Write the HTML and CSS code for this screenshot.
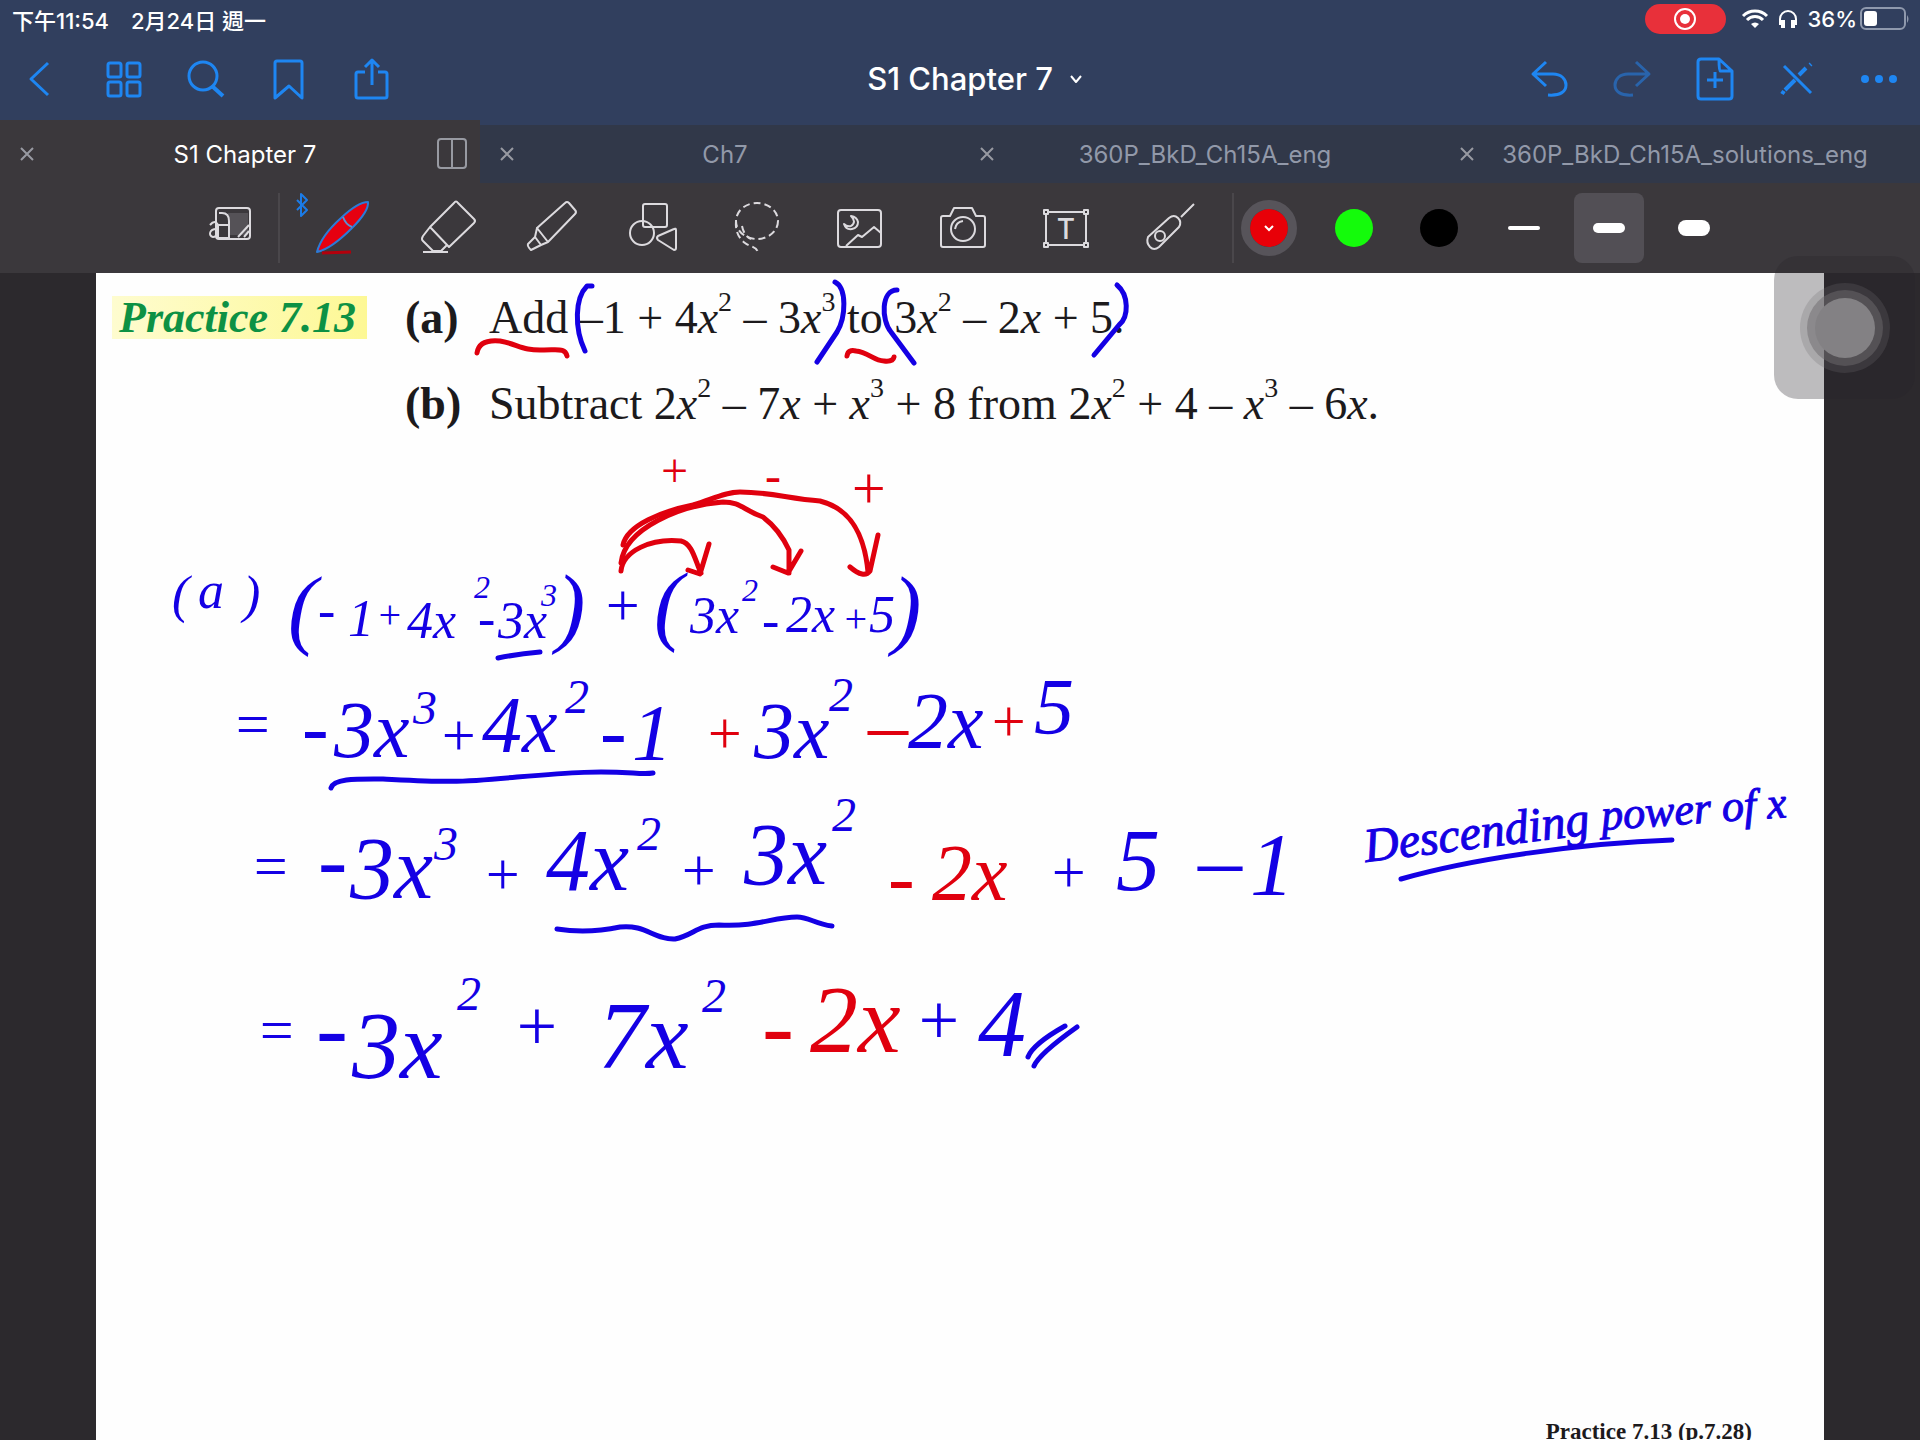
FILE: index.html
```html
<!DOCTYPE html>
<html lang="zh-Hant">
<head>
  <meta charset="UTF-8">
  <meta name="viewport" content="width=device-width, initial-scale=1.0">
  <title>S1 Chapter 7</title>
  <link rel="stylesheet" href="styles.css">
</head>
<body>
<header class="top">
  <div class="status">
    <span>下午11:54</span>
    <span class="date">2月24日 週一</span>
    <div class="status-right">
      <span class="record">
        <svg width="24" height="24" viewBox="0 0 24 24"><circle cx="12" cy="12" r="10" fill="none" stroke="#fff" stroke-width="2"/><circle cx="12" cy="12" r="5" fill="#fff"/></svg>
      </span>
      <svg class="wifi" width="26" height="20" viewBox="0 0 26 20" fill="none" stroke="#fff" stroke-width="3"><path d="M1 7a17 17 0 0 1 24 0M5 11a11 11 0 0 1 16 0"/><path d="M13 19l-4-4a6 6 0 0 1 8 0z" fill="#fff" stroke="none"/></svg>
      <svg class="phones" width="20" height="20" viewBox="0 0 20 20" fill="none" stroke="#fff" stroke-width="2"><path d="M2 16V10a8 8 0 0 1 16 0v6"/><path d="M5 11v8M15 11v8" stroke-width="4"/></svg>
      <span>36%</span>
      <svg class="battery" width="50" height="24" viewBox="0 0 50 24"><rect x="1" y="1" width="44" height="21" rx="5" fill="none" stroke="#8f99ad" stroke-width="2"/><rect x="4" y="4" width="13" height="15" rx="3" fill="#fff"/><path d="M47 8q3 4 0 8z" fill="#8f99ad"/></svg>
    </div>
  </div>

  <nav class="nav">
    <button aria-label="Back"><svg viewBox="0 0 44 44"><path d="M29 6 12 22l17 16"/></svg></button>
    <button aria-label="Thumbnails"><svg viewBox="0 0 44 44"><rect x="7" y="6" width="13" height="14" rx="2"/><rect x="26" y="6" width="13" height="14" rx="2"/><rect x="7" y="25" width="13" height="14" rx="2"/><rect x="26" y="25" width="13" height="14" rx="2"/></svg></button>
    <button aria-label="Search"><svg viewBox="0 0 44 44"><circle cx="20" cy="19" r="14"/><path d="m29 29 11 10" stroke-width="4"/></svg></button>
    <button aria-label="Bookmark"><svg viewBox="0 0 44 44"><path d="M10 41V6q0-2 2-2h23q2 0 2 2v35L24 29z"/></svg></button>
    <button aria-label="Share"><svg viewBox="0 0 44 44"><path d="M18 15h-7q-2 0-2 2v22q0 2 2 2h27q2 0 2-2V17q0-2-2-2h-7M25 28V3m-7 7 7-7 7 7"/></svg></button>
    <button class="doc-title">S1 Chapter 7 <svg class="caret" viewBox="0 0 14 14"><path d="m2 4 5 6 5-6"/></svg></button>
    <button aria-label="Undo"><svg viewBox="0 0 44 44"><path d="M17 5 4 17l13 12M5 17h19c8 0 13 5 13 11s-5 11-18 10"/></svg></button>
    <button aria-label="Redo" class="off"><svg viewBox="0 0 44 44"><path d="m25 5 13 12-13 12M37 17H17C9 17 4 22 4 28s5 11 18 10"/></svg></button>
    <button aria-label="Add page"><svg viewBox="0 0 44 44"><path d="M26 2H8Q5 2 5 5v34q0 3 3 3h28q3 0 3-3V14zq0 12 1 12h12M22 15v16M14 23h16"/></svg></button>
    <button aria-label="Read only"><svg viewBox="0 0 44 44"><path d="m9 9 27 27"/><path d="m10 33 10-10m4-5 7-7M35 8l1-1M7 37l2-3" stroke-width="4"/></svg></button>
    <button aria-label="More"><svg viewBox="0 0 44 44" class="dots"><circle cx="8" cy="22" r="4"/><circle cx="22" cy="22" r="4"/><circle cx="36" cy="22" r="4"/></svg></button>
  </nav>

  <div class="tabs">
    <div class="tab active">
      <button class="close" aria-label="Close tab"><svg viewBox="0 0 14 14"><path d="m1 1 12 12M13 1 1 13"/></svg></button>
      <a href="#">S1 Chapter 7</a>
      <button class="split" aria-label="Split view"><svg viewBox="0 0 32 32"><rect x="2" y="1" width="28" height="29" rx="3"/><path d="M16 1v29"/></svg></button>
    </div>
    <div class="tab">
      <button class="close" aria-label="Close tab"><svg viewBox="0 0 14 14"><path d="m1 1 12 12M13 1 1 13"/></svg></button>
      <a href="#">Ch7</a>
    </div>
    <div class="tab">
      <button class="close" aria-label="Close tab"><svg viewBox="0 0 14 14"><path d="m1 1 12 12M13 1 1 13"/></svg></button>
      <a href="#">360P_BkD_Ch15A_eng</a>
    </div>
    <div class="tab">
      <button class="close" aria-label="Close tab"><svg viewBox="0 0 14 14"><path d="m1 1 12 12M13 1 1 13"/></svg></button>
      <a href="#">360P_BkD_Ch15A_solutions_eng</a>
    </div>
  </div>
</header>

<div class="toolbar">
  <button class="zoom-tool" aria-label="Zoom window"><svg viewBox="0 0 60 60"><path d="M29 15h20v22H29z" fill="#555257" stroke="none"/><rect x="17" y="10" width="34" height="31" rx="3"/><path d="M20 15h3q7 0 7 8v17H19M19 27h11M39 39l11-12M45 39l5-6M11 27q5-6 8 0v13M19 31c-9-1-10 7-5 8q3 0 5-4"/></svg></button>
  <button class="pen-tool" aria-label="Pen"><svg viewBox="0 0 60 60"><path d="M-18 2-8 12l-6 6V-4l6 6-10 10" stroke="#1b7ce8"/><path d="M2 54Q6 38 26 20 43 4 53 4q1 9-16 26Q16 51 2 54z" fill="#e60010" stroke="#2b7bd8"/><path d="M28 19q3 8 9 10" stroke="#5b8fd0"/><path d="M7 55l29-1" stroke="#b3000c" stroke-width="3"/></svg></button>
  <button aria-label="Eraser"><svg viewBox="0 0 60 60"><path d="M36 5q2-3 4 0l16 16q2 2 0 4L31 49 12 29zM12 29l-7 9q-2 3 0 5l10 10h8l6-6M5 54h25"/></svg></button>
  <button aria-label="Highlighter"><svg viewBox="0 0 60 60"><path d="M16 30 44 5q2-2 4 0l6 7q2 2 0 4L27 44zM16 30l-2 9 6 8 7-3M14 39l-7 7q-1 2 3 6l10-5"/></svg></button>
  <button aria-label="Shapes"><svg viewBox="0 0 60 60"><rect x="19" y="6" width="24" height="23" rx="2"/><circle cx="18" cy="35" r="12"/><path d="M34 38q-2 2 0 4l16 10q2 0 2-2V32q0-2-2-1z"/></svg></button>
  <button aria-label="Lasso"><svg viewBox="0 0 60 60" stroke-dasharray="7 4"><ellipse cx="30" cy="23" rx="21" ry="18"/><path d="M9 23c-1 12 4 18 9 22s12 3 13 10M15 28q2 10 9 13"/></svg></button>
  <button aria-label="Image"><svg viewBox="0 0 60 60"><rect x="8" y="12" width="43" height="37" rx="3"/><path d="M21 18q6 6 0 10-4 1-7-2 2 6 8 5 6-1 6-7-1-5-7-6zM16 48l12-11 4 2 12-10 7 6"/></svg></button>
  <button aria-label="Camera"><svg viewBox="0 0 60 60"><path d="M10 18h7l4-8h18l4 8h7q2 0 2 2v27q0 2-2 2H10q-2 0-2-2V20q0-2 2-2z"/><circle cx="30" cy="31" r="12"/><path d="M22 31q1-7 8-8"/></svg></button>
  <button aria-label="Text"><svg viewBox="0 0 60 60"><path d="M13 14h34M13 47h34M10 17v27M50 17v27"/><path d="M8 12h4v4H8zM48 12h4v4h-4zM8 45h4v4H8zM48 45h4v4h-4z"/><text class="tee" x="30" y="41">T</text></svg></button>
  <button aria-label="Laser pointer"><svg viewBox="0 0 60 60"><path d="M9 39 30 20q5-4 9 0t1 9L20 49q-5 4-9 0t-2-10zM42 19 55 6"/><circle cx="21" cy="38" r="5"/></svg></button>
  <div class="inks">
    <button class="ink red" aria-label="Red"><svg class="caret" viewBox="0 0 14 14"><path d="m3 5 4 4 4-4"/></svg></button>
    <button class="ink green" aria-label="Green"></button>
    <button class="ink black" aria-label="Black"></button>
    <button class="stroke thin" aria-label="Thin"></button>
    <button class="stroke medium" aria-label="Medium"></button>
    <button class="stroke thick" aria-label="Thick"></button>
  </div>
</div>

<main class="canvas">
  <article class="sheet">
    <section class="exercise">
      <h1>Practice 7.13</h1>
      <ol>
        <li><b>(a)</b><p>Add –1 + 4<i>x</i><sup>2</sup> – 3<i>x</i><sup>3</sup> to 3<i>x</i><sup>2</sup> – 2<i>x</i> + 5.</p></li>
        <li><b>(b)</b><p>Subtract 2<i>x</i><sup>2</sup> – 7<i>x</i> + <i>x</i><sup>3</sup> + 8 from 2<i>x</i><sup>2</sup> + 4 – <i>x</i><sup>3</sup> – 6<i>x</i>.</p></li>
      </ol>
    </section>
    <footer>Practice 7.13 (p.7.28)</footer>

    <!-- ink layer: free-hand notes over the page -->
    <svg class="notes" width="1728" height="1167" viewBox="96 273 1728 1167">
      <g class="pen-red">
        <path d="M477 353q2-14 23-12c18 3 22 10 44 9 15 0 21-2 23 6"/>
        <path d="M847 356q1-7 9-5c12 1 18 10 28 10q9 1 10-4"/>
        <path d="M621 571c2-20 30-33 60-30 12 3 14 20 20 32M688 570l12 4 9-30"/>
        <path d="M621 563c4-35 60-58 102-61 18 0 20 8 40 15 12 9 20 20 26 33v23M773 567l15 6 13-22"/>
        <path d="M623 545c4-20 40-34 70-40 20-6 32-13 47-13 30 0 50 7 80 9 28 7 44 29 48 71M850 567q14 12 20 4l8-36"/>
      </g>
      <g class="pen-blue">
        <path d="M592 286h-5c-12 12-13 42-2 65"/>
        <path d="M835 282c12 6 11 35 2 50l-20 30"/>
        <path d="M897 290c-16 0-16 30-6 42l23 31"/>
        <path d="M1117 285c12 10 12 32 2 40l-25 30"/>
        <path d="M498 658q20-4 42-6"/>
        <path d="M331 788c3-10 27-9 52-9 60 3 70 4 134-2 60-5 80-6 116-4q14 1 20 0"/>
        <path d="M557 929c25 4 44 2 63-2 25-3 35 13 55 12 19-4 22-14 44-14 40 2 53-8 78-8 12 0 18 7 35 9"/>
        <path d="M1401 879c70-20 180-36 271-39"/>
        <path d="M1065 1026q-32 18-37 31M1077 1027q-38 27-43 39"/>
      </g>

      <text class="hand s48 t-red"><tspan x="658" y="487">+</tspan><tspan x="765" y="492">-</tspan></text>
      <text class="hand s60 t-red"><tspan x="848" y="508">+</tspan></text>

      <text class="hand s52"><tspan x="172" y="612">(</tspan><tspan x="198" y="608">a</tspan><tspan x="243" y="612">)</tspan><tspan x="318" y="628">-</tspan><tspan x="348" y="636">1</tspan><tspan x="407" y="638">4x</tspan><tspan x="478" y="636">-</tspan><tspan x="498" y="638">3x</tspan><tspan x="690" y="633">3x</tspan><tspan x="762" y="638">-</tspan><tspan x="786" y="632">2x</tspan><tspan x="869" y="632">5</tspan></text>
      <text class="hand s88"><tspan x="288" y="638">(</tspan><tspan x="556" y="636">)</tspan><tspan x="654" y="634">(</tspan><tspan x="892" y="638">)</tspan></text>
      <text class="hand s40"><tspan x="376" y="628">+</tspan><tspan x="842" y="632">+</tspan></text>
      <text class="hand s60"><tspan x="602" y="625">+</tspan></text>
      <text class="hand s32"><tspan x="474" y="598">2</tspan><tspan x="541" y="606">3</tspan><tspan x="742" y="601">2</tspan></text>

      <text class="hand s80"><tspan x="302" y="754">-</tspan><tspan x="334" y="757">3x</tspan><tspan x="482" y="752">4x</tspan><tspan x="600" y="758">-</tspan><tspan x="632" y="760">1</tspan><tspan x="754" y="758">3x</tspan><tspan x="908" y="748">2x</tspan><tspan x="1034" y="734">5</tspan></text>
      <text class="hand s60"><tspan x="232" y="744">=</tspan><tspan x="438" y="755">+</tspan></text>
      <text class="hand s48"><tspan x="413" y="724">3</tspan><tspan x="565" y="713">2</tspan><tspan x="829" y="711">2</tspan></text>
      <text class="hand s60 t-red"><tspan x="704" y="753">+</tspan><tspan x="988" y="741">+</tspan></text>
      <text class="hand s80 t-red"><tspan x="868" y="752">–</tspan></text>

      <text class="hand s88"><tspan x="318" y="890">-</tspan><tspan x="350" y="898">3x</tspan><tspan x="546" y="890">4x</tspan><tspan x="744" y="884">3x</tspan><tspan x="1116" y="890">5</tspan><tspan x="1198" y="890">–</tspan><tspan x="1250" y="894">1</tspan></text>
      <text class="hand s60"><tspan x="250" y="886">=</tspan><tspan x="482" y="894">+</tspan><tspan x="678" y="890">+</tspan><tspan x="1048" y="892">+</tspan></text>
      <text class="hand s48"><tspan x="434" y="860">3</tspan><tspan x="637" y="850">2</tspan><tspan x="832" y="831">2</tspan></text>
      <text class="hand s80 t-red"><tspan x="888" y="904">-</tspan><tspan x="932" y="900">2x</tspan></text>

      <text class="hand s96"><tspan x="316" y="1060">-</tspan><tspan x="352" y="1078">3x</tspan><tspan x="598" y="1068">7x</tspan><tspan x="978" y="1056">4</tspan></text>
      <text class="hand s60"><tspan x="256" y="1050">=</tspan></text>
      <text class="hand s72"><tspan x="512" y="1050">+</tspan><tspan x="914" y="1044">+</tspan></text>
      <text class="hand s48"><tspan x="457" y="1010">2</tspan><tspan x="702" y="1012">2</tspan></text>
      <text class="hand s96 t-red"><tspan x="762" y="1058">-</tspan><tspan x="810" y="1052">2x</tspan></text>

      <text class="hand note s48" transform="rotate(-7 1366 862)" x="1366" y="862">Descending</text>
      <text class="hand note s44" transform="rotate(-4 1602 830)" x="1602" y="830">power of x</text>
    </svg>
  </article>
  <button class="assist" aria-label="AssistiveTouch"><span></span></button>
</main>
</body>
</html>
```
FILE: styles.css
```css
* {
  box-sizing: border-box;
}
body {
  margin: 0;
  height: 100vh;
  display: flex;
  flex-direction: column;
  overflow: hidden;
  background: #2c292d;
  color: #fff;
  font-family: Inter, "Noto Sans CJK TC", sans-serif;
}
button {
  display: flex;
  align-items: center;
  justify-content: center;
  padding: 0;
  border: none;
  background: none;
  color: inherit;
  font: inherit;
  cursor: pointer;
}
a {
  color: inherit;
  text-decoration: none;
}
svg {
  overflow: visible;
}
.top {
  background: #313f5e;
}

/* status bar */
.status {
  display: flex;
  align-items: center;
  height: 37px;
  padding: 0 10px 0 12px;
  font-size: 22px;
  font-weight: 500;
}
.date {
  margin-left: 22px;
}
.status-right {
  display: flex;
  align-items: center;
  margin-left: auto;
}
.record {
  display: flex;
  align-items: center;
  justify-content: center;
  width: 81px;
  height: 30px;
  margin-right: 16px;
  border-radius: 15px;
  background: #e8303a;
}
.wifi,
.phones {
  margin-right: 10px;
}
.battery {
  margin-left: 3px;
}

/* navigation bar */
.nav {
  display: flex;
  height: 83px;
}
.nav button {
  width: 82px;
}
.nav svg {
  width: 44px;
  height: 44px;
  fill: none;
  stroke: #1e86f2;
  stroke-width: 3;
  stroke-linejoin: round;
}
.nav .off svg {
  stroke: #2964ac;
}
.nav .dots {
  fill: #1e86f2;
  stroke: none;
}
.nav .doc-title {
  flex: 1;
  gap: 16px;
  padding-left: 30px;
  font-size: 31px;
  font-weight: 500;
}
.nav .caret,
.ink .caret {
  width: 14px;
  height: 14px;
  fill: none;
  stroke: #fff;
  stroke-width: 2;
}

/* tabs */
.tabs {
  display: flex;
  height: 63px;
}
.tab {
  flex: 1;
  display: grid;
  grid-template-columns: 54px 1fr 44px;
  align-items: center;
  border-top: 5px solid #313f5e;
  background: #313849;
  color: #9299a9;
  font-size: 24px;
  text-align: center;
  white-space: nowrap;
}
.tab.active {
  border-color: #3b383c;
  background: #3b383c;
  color: #fff;
}
.tab svg {
  width: 14px;
  height: 14px;
  fill: none;
  stroke: #989aa2;
  stroke-width: 2;
}
.tab .split {
  margin-left: -12px;
}
.tab .split svg {
  width: 32px;
  height: 32px;
}

/* tools */
.toolbar {
  display: flex;
  align-items: center;
  height: 90px;
  flex-shrink: 0;
  padding-left: 180px;
  background: #3b383c;
}
.toolbar > button {
  width: 103px;
  height: 70px;
}
.toolbar > .zoom-tool {
  width: 100px;
  border-right: 2px solid #4a474b;
}
.toolbar > .pen-tool {
  margin-left: 13px;
}
.toolbar > button svg {
  width: 60px;
  height: 60px;
  fill: none;
  stroke: #dcdade;
  stroke-width: 2;
  stroke-linejoin: round;
}
.toolbar .tee {
  fill: #dcdade;
  stroke: none;
  font-size: 28px;
  font-weight: 500;
  text-anchor: middle;
}
.inks {
  display: flex;
  align-items: center;
  gap: 15px;
  height: 70px;
  margin-left: 12px;
  border-left: 2px solid #4a474b;
}
.ink {
  width: 70px;
  height: 70px;
}
.ink::before {
  content: "";
  width: 38px;
  height: 38px;
  border-radius: 50%;
  background: #000;
}
.ink.green::before {
  background: #14fb0b;
}
.ink.red .caret {
  position: absolute;
}
.ink.red::before {
  box-sizing: content-box;
  border: 9px solid #57545a;
  background: #e80008;
  background-clip: padding-box;
}
.stroke {
  width: 70px;
  height: 70px;
  border-radius: 8px;
}
.stroke::before {
  content: "";
  width: 32px;
  height: 4px;
  border-radius: 8px;
  background: #fff;
}
.stroke.medium {
  background: #524f55;
}
.stroke.medium::before {
  height: 10px;
}
.stroke.thick::before {
  height: 16px;
}

/* page */
.canvas {
  position: relative;
  flex: 1;
  min-height: 0;
}
.sheet {
  position: relative;
  display: flex;
  flex-direction: column;
  width: 90%;
  height: calc(100% + 6px);
  margin: 0 auto;
  padding: 16px 72px 0 16px;
  background: #fefefe;
  color: #1c1a1c;
  font-family: "Liberation Serif", serif;
}
.exercise {
  display: flex;
  align-items: flex-start;
}
.exercise h1 {
  width: 255px;
  height: 43px;
  margin: 7px 38px 0 0;
  padding-left: 7px;
  background: linear-gradient(to right, #fefccf, #fdf895);
  color: #0d9144;
  font: italic bold 44px/43px "Liberation Serif", serif;
  white-space: nowrap;
}
.exercise ol {
  margin: -14px 0 0;
  padding: 0;
  list-style: none;
  font-size: 46px;
  line-height: 86px;
  white-space: nowrap;
}
.exercise li {
  display: flex;
  height: 86px;
}
.exercise li b {
  width: 84px;
}
.exercise li p {
  margin: 0;
}
.exercise sup {
  font-size: 28px;
  line-height: 0;
  vertical-align: 22px;
}
.sheet footer {
  margin-top: auto;
  font-size: 23px;
  font-weight: bold;
  line-height: 28px;
  text-align: right;
}

/* handwriting */
.notes {
  position: absolute;
  top: 0;
  left: 0;
}
.notes path {
  fill: none;
  stroke-width: 5;
  stroke-linecap: round;
  stroke-linejoin: round;
}
.pen-red {
  stroke: #e0000e;
}
.pen-blue {
  stroke: #1400e4;
}
.hand {
  fill: #1400e4;
  font-family: "Liberation Serif", serif;
  font-style: italic;
}
.hand.t-red {
  fill: #e0000e;
}
.hand.note {
  stroke: #1400e4;
}
.s32 { font-size: 32px; }
.s40 { font-size: 40px; }
.s44 { font-size: 44px; }
.s48 { font-size: 48px; }
.s52 { font-size: 52px; }
.s60 { font-size: 60px; }
.s72 { font-size: 72px; }
.s80 { font-size: 80px; }
.s88 { font-size: 88px; }
.s96 { font-size: 96px; }

/* floating assistive button */
.assist {
  position: absolute;
  top: -17px;
  right: 5px;
  width: 141px;
  height: 143px;
  border-radius: 24px;
  background: rgba(40, 36, 42, 0.3);
}
.assist span {
  width: 60px;
  height: 60px;
  border-radius: 50%;
  background: #838184;
  box-shadow: 0 0 0 8px rgba(110, 106, 110, 0.5), 0 0 0 15px rgba(110, 106, 110, 0.25);
}
```
